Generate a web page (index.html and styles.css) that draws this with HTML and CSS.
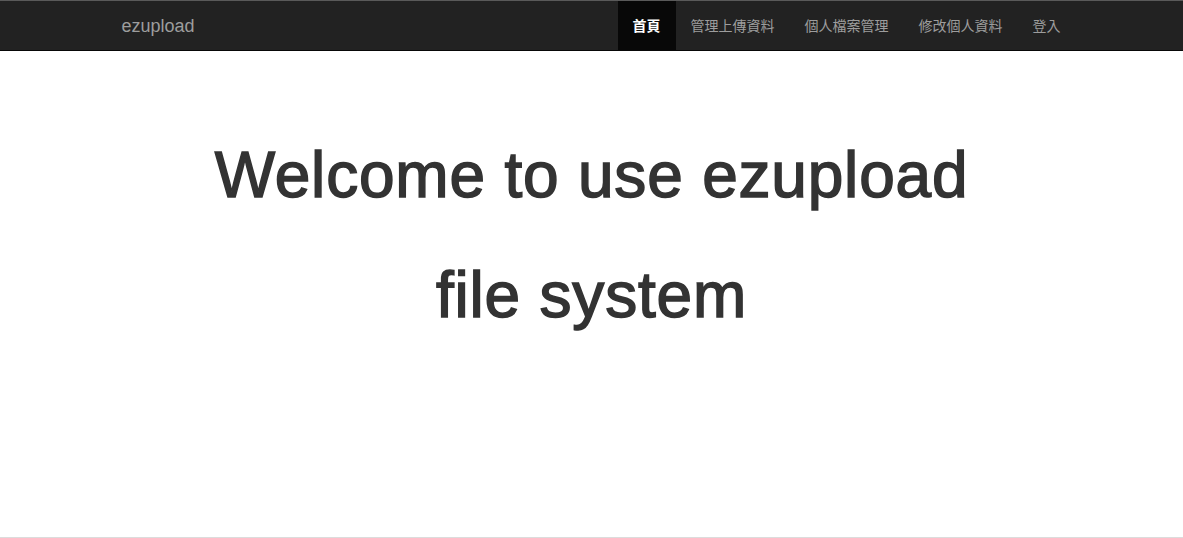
FILE: index.html
```html
<!DOCTYPE html>
<html lang="zh-Hant">
<head>
<meta charset="utf-8">
<title>ezupload</title>
<link rel="stylesheet" href="styles.css">
</head>
<body>
<div class="page">
  <header class="navbar">
    <div class="container">
      <a class="brand" href="#">ezupload</a>
      <nav class="nav">
        <a class="nav-item active" href="#">首頁</a>
        <a class="nav-item" href="#">管理上傳資料</a>
        <a class="nav-item" href="#">個人檔案管理</a>
        <a class="nav-item" href="#">修改個人資料</a>
        <a class="nav-item" href="#">登入</a>
      </nav>
    </div>
  </header>
  <main class="main">
    <h1 class="welcome">Welcome to use ezupload<br>file system</h1>
  </main>
  <footer class="footer"></footer>
</div>
</body>
</html>
```

FILE: styles.css
```css
* { box-sizing: border-box; }
html, body { margin: 0; padding: 0; }
body {
  font-family: "Liberation Sans", Arial, "Noto Sans CJK TC", sans-serif;
  background: #fff;
  color: #333;
}
.page {
  display: flex;
  flex-direction: column;
  height: 538px;
}
.navbar {
  background: #222;
  border-top: 1px solid #5a5a5a;
  border-bottom: 1px solid #080808;
  height: 51px;
  flex: none;
}
.container {
  width: 970px;
  margin: 0 auto;
  padding: 0 15px;
  height: 49px;
  display: flex;
  justify-content: space-between;
  align-items: stretch;
}
.brand {
  padding: 0 15px;
  margin-left: -15px;
  font-size: 18px;
  line-height: 50px;
  color: #9d9d9d;
  text-decoration: none;
}
.nav {
  display: flex;
  margin-right: -14px;
}
.nav-item {
  padding: 0 15px;
  font-family: "Noto Sans CJK TC", "Liberation Sans", sans-serif;
  font-size: 14px;
  line-height: 49px;
  color: #9d9d9d;
  text-decoration: none;
}
.nav-item.active {
  color: #fff;
  background: #080808;
  font-weight: 700;
}
.main {
  flex: 1;
  padding-top: 64px;
}
.welcome {
  margin: 0;
  text-align: center;
  font-size: 64px;
  line-height: 120px;
  font-weight: 500;
  letter-spacing: 0.8px;
  color: #333;
  -webkit-text-stroke: 1.5px #333;
}
.footer {
  flex: none;
  height: 1px;
  background: #dcdcdc;
}
```
